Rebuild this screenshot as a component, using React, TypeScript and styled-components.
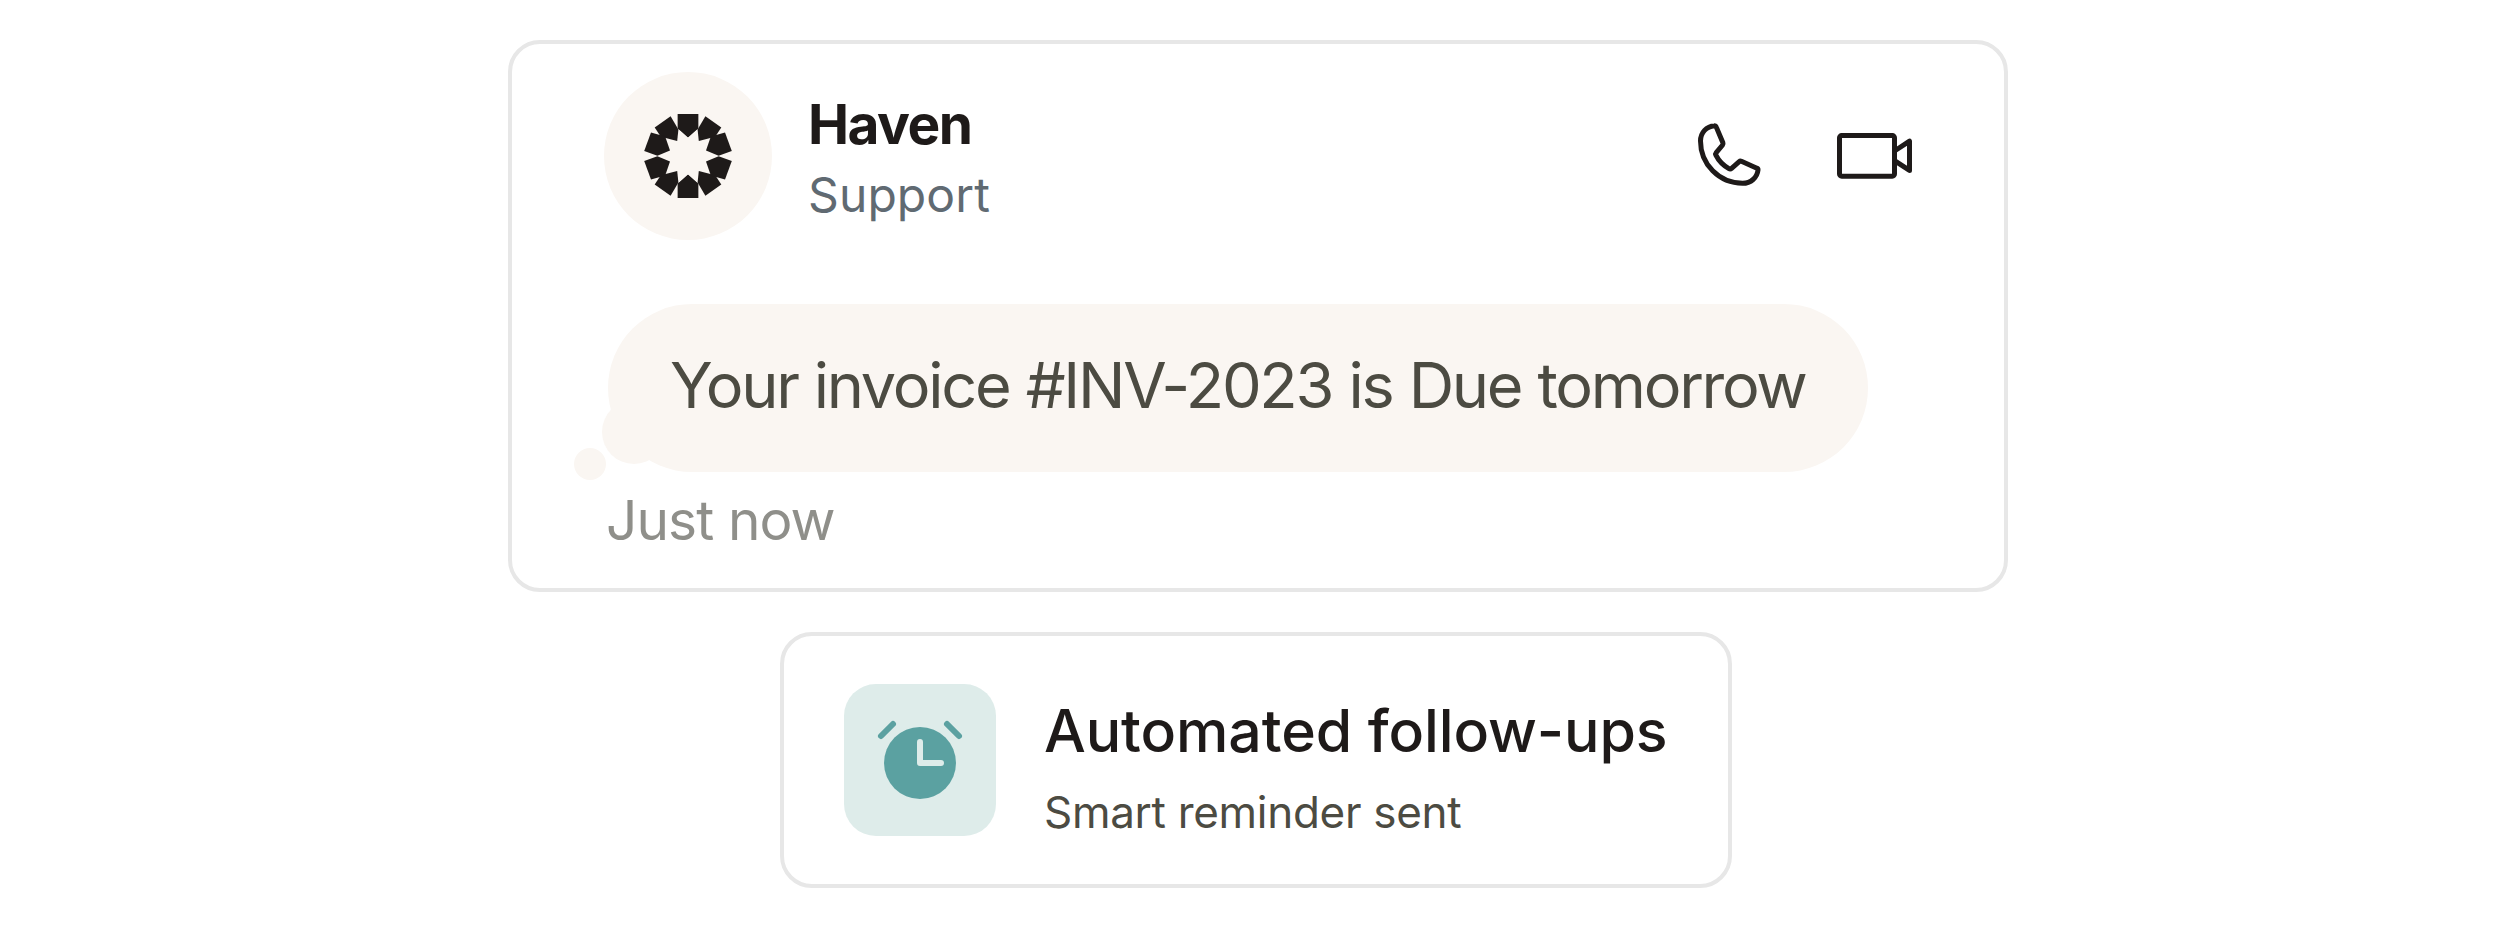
import React from 'react';
import styled, { createGlobalStyle } from 'styled-components';

const QUADRANTS = ['1 1', '-1 1', '1 -1', '-1 -1'];

const IcHaven = () => (
  <svg width="90" height="88" viewBox="-45 -44 90 88" fill="#1e1a19">
    {QUADRANTS.map((scale) => (
      <g key={scale} transform={`scale(${scale})`}>
        <path d="M-10.2 -42H10.2V-27.8L0 -18.7L-10.2 -27.8Z" />
        <path d="M17.4 -39.7L33.3 -28.5L27.2 -19.2L10.8 -15L9.6 -26.6Z" />
        <path d="M37 -23.4L43.8 -5L30.6 -0.3L18 -5.6L22.8 -19.4Z" />
      </g>
    ))}
  </svg>
);

const IcPhone = () => (
  <svg width="68" height="68" viewBox="0 0 68 68" fill="none">
    <path
      d="M18.4 3.7C10.6 4.3 4.5 10.6 4.5 19C4.5 42.2 23 61.3 46.6 61.3C54.8 61.3 61.2 55.6 62 48C62.1 47.2 61.7 46.5 60.9 46.2L45.4 39.3C44.6 39 43.8 39.1 43.2 39.6L35.6 46.3C34.8 47 33.8 47.1 32.9 46.6C27.6 43.7 22.6 38.6 19.9 33.2C19.5 32.4 19.6 31.4 20.2 30.7L26.6 23C27.1 22.4 27.2 21.6 26.9 20.8L20.2 4.9C19.9 4.1 19.2 3.6 18.4 3.7Z"
      stroke="#1e1a19"
      strokeWidth="5"
      strokeLinejoin="round"
    />
  </svg>
);

const IcVideo = () => (
  <svg width="76" height="48" viewBox="0 0 76 48" fill="none">
    <g stroke="#1e1a19" strokeWidth="5" strokeLinejoin="round">
      <rect x="3.5" y="3.6" width="55" height="40.6" rx="2.2" />
      <path d="M58.5 19L73.5 9.2V38.4L58.5 28.6" />
    </g>
  </svg>
);

const IcAlarm = () => (
  <svg width="88" height="88" viewBox="0 0 88 88" fill="none">
    <circle cx="44" cy="47" r="36" fill="#5ba1a1" />
    <g strokeWidth="6" strokeLinecap="round" strokeLinejoin="round">
      <path d="M5 20L17 8M71 8L83 20" stroke="#5ba1a1" />
      <path d="M44 26V47H65" stroke="#deecea" />
    </g>
  </svg>
);

const App = () => {
  return (
    <>
      <GlobalStyle />
      <StPage>
        <StChatCard>
          <StChatHeader>
            <StAvatar>
              <IcHaven />
            </StAvatar>
            <StContact>
              <StContactName>Haven</StContactName>
              <StContactRole>Support</StContactRole>
            </StContact>
            <StCallActions>
              <StIconButton type="button" aria-label="Call">
                <IcPhone />
              </StIconButton>
              <StIconButton type="button" aria-label="Video call">
                <IcVideo />
              </StIconButton>
            </StCallActions>
          </StChatHeader>
          <StBubble>Your invoice #INV-2023 is Due tomorrow</StBubble>
          <StTime>Just now</StTime>
        </StChatCard>
        <StReminderCard>
          <StReminderIcon>
            <IcAlarm />
          </StReminderIcon>
          <StReminderInfo>
            <StReminderTitle>Automated follow-ups</StReminderTitle>
            <StReminderText>Smart reminder sent</StReminderText>
          </StReminderInfo>
        </StReminderCard>
      </StPage>
    </>
  );
};

export default App;

const GlobalStyle = createGlobalStyle`
  * {
    box-sizing: border-box;
  }

  body {
    margin: 0;

    background-color: #ffffff;
    font-family: Inter, 'Liberation Sans', sans-serif;
  }

  p {
    margin: 0;
  }
`;

const StPage = styled.main`
  display: flex;
  flex-direction: column;
  align-items: center;
  gap: 40px;

  height: 928px;
  padding-top: 40px;
`;

const StCard = styled.section`
  border: 4px solid #e7e7e7;
  border-radius: 32px;
  background-color: #ffffff;
`;

const StChatCard = styled(StCard)`
  width: 1500px;
  height: 552px;
  margin-left: 4px;
  padding: 28px 92px 0;
`;

const StChatHeader = styled.header`
  display: flex;
  align-items: center;
`;

const StAvatar = styled.div`
  display: flex;
  justify-content: center;
  align-items: center;

  width: 168px;
  height: 168px;

  border-radius: 50%;
  background-color: #faf6f2;
`;

const StContact = styled.div`
  display: flex;
  flex-direction: column;
  gap: 3px;

  padding: 7px 0 0 36px;

  white-space: nowrap;
`;

const StContactName = styled.p`
  color: #1e1a19;
  font-size: 55px;
  font-weight: 650;
  line-height: 68px;
  letter-spacing: -1.5px;
`;

const StContactRole = styled.p`
  color: #606a72;
  font-size: 48px;
  line-height: 68px;
  letter-spacing: 0.1px;
`;

const StCallActions = styled.div`
  display: flex;
  align-items: center;
  gap: 72px;

  margin-left: auto;
`;

const StIconButton = styled.button`
  display: flex;

  padding: 0;

  border: none;
  background: none;
`;

const StBubble = styled.p`
  position: relative;

  width: 1260px;
  height: 168px;
  margin: 64px 0 0 4px;
  padding-left: 62px;

  border-radius: 84px;
  background-color: #faf6f2;
  color: #4c4b42;
  font-size: 63px;
  line-height: 162px;
  letter-spacing: -2.27px;
  word-spacing: 0.8px;
  white-space: nowrap;

  &::before,
  &::after {
    content: '';
    position: absolute;

    border-radius: 50%;
    background-color: #faf6f2;
  }

  &::before {
    left: -6px;
    bottom: 8px;

    width: 64px;
    height: 64px;
  }

  &::after {
    left: -34px;
    bottom: -8px;

    width: 32px;
    height: 32px;
  }
`;

const StTime = styled.p`
  margin: 12px 0 0 2px;

  color: #8f8f8a;
  font-size: 55px;
  line-height: 72px;
  letter-spacing: -0.9px;
`;

const StReminderCard = styled(StCard)`
  display: flex;
  align-items: center;
  gap: 48px;

  width: 952px;
  height: 256px;
  padding-left: 60px;
`;

const StReminderIcon = styled.div`
  display: flex;
  justify-content: center;
  align-items: center;

  width: 152px;
  height: 152px;

  border-radius: 32px;
  background-color: #deecea;
`;

const StReminderInfo = styled.div`
  display: flex;
  flex-direction: column;
  gap: 17px;

  padding-top: 14px;

  white-space: nowrap;
`;

const StReminderTitle = styled.p`
  color: #1e1a19;
  font-size: 59px;
  font-weight: 500;
  line-height: 72px;
  letter-spacing: -0.1px;
`;

const StReminderText = styled.p`
  color: #4c4b42;
  font-size: 44px;
  line-height: 56px;
  letter-spacing: -0.3px;
`;
